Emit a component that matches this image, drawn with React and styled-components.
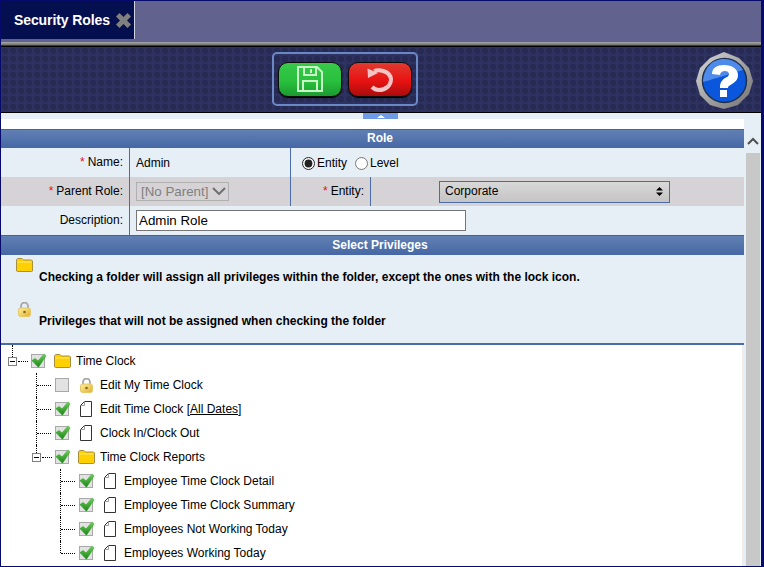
import styled, { createGlobalStyle } from "styled-components";

const GlobalStyle = createGlobalStyle`
    html, body {
        margin: 0;
        padding: 0;
        background: #ffffff;
    }
    body {
        font-family: "Liberation Sans", Arial, sans-serif;
        font-size: 12px;
        color: #000000;
    }
    * {
        box-sizing: border-box;
    }
`

const Frame = styled.div`
    width: 764px;
    height: 567px;
    overflow: hidden;
    display: flex;
    flex-direction: column;
    border: 1px solid #050a6b;
    border-right-width: 3px;
`
const TabBar = styled.div`
    height: 41px;
    flex: none;
    display: flex;
    align-items: flex-start;
    background: #62628f;
`
const Tab = styled.div`
    width: 134px;
    height: 38px;
    display: flex;
    align-items: center;
    gap: 6px;
    padding-left: 13px;
    background: #040f4f;
    border-right: 1px solid #d0d4e0;
`
const TabTitle = styled.span`
    font-size: 14px;
    font-weight: bold;
    letter-spacing: -0.1px;
    color: #ffffff;
    white-space: nowrap;
`
const Rule = styled.div`
    height: 4px;
    flex: none;
    background: linear-gradient(#a8a8a8, #6f6f6f);
    border-bottom: 1px solid #3a3a3a;
`
const Toolbar = styled.div`
    height: 67px;
    flex: none;
    display: flex;
    align-items: center;
    padding-left: 271px;
    padding-bottom: 1px;
    border-top: 1px solid #000000;
    border-bottom: 1px solid #000000;
    background-color: #2e3261;
    background-image: radial-gradient(circle at 4px 4px, #272a52 3px, transparent 3.6px);
    background-size: 8px 8px;
    position: relative;
`
const ActionGroup = styled.div`
    width: 146px;
    height: 54px;
    display: flex;
    align-items: center;
    justify-content: center;
    gap: 6px;
    border: 2px solid #6a88c4;
    border-radius: 5px;
`
const ActionButton = styled.button`
    width: 64px;
    height: 35px;
    padding: 0;
    display: flex;
    align-items: center;
    justify-content: center;
    border: 1px solid #0c0c0c;
    border-radius: 10px;
    background: ${(p) => p.$tone === "green"
        ? "linear-gradient(#38c84a, #28c03c 55%, #1c9a30)"
        : "linear-gradient(#e03a30, #e81212 55%, #a80c0c)"};
    box-shadow: 0 1px 1px #000000;
`
const HelpButton = styled.div`
    position: absolute;
    right: 8px;
    top: 5px;
    width: 57px;
    height: 57px;
`
const CollapseStrip = styled.div`
    height: 6px;
    flex: none;
    display: flex;
    padding-left: 362px;
    background: #e6eef6;
`
const CollapseHandle = styled.div`
    width: 35px;
    height: 6px;
    display: flex;
    align-items: center;
    justify-content: center;
    background: #6f9ae6;
    &::after {
        content: "";
        border-left: 4px solid transparent;
        border-right: 4px solid transparent;
        border-bottom: 3px solid #ffffff;
    }
`
const ContentArea = styled.div`
    flex: 1;
    display: flex;
    min-height: 0;
`
const Main = styled.div`
    width: 743px;
    flex: none;
    padding-top: 10px;
    display: flex;
    flex-direction: column;
`
const SectionHeader = styled.div`
    height: ${(p) => p.$height}px;
    flex: none;
    display: flex;
    align-items: center;
    justify-content: center;
    padding: 0 0 2px 15px;
    font-weight: bold;
    color: #ffffff;
    background: linear-gradient(#6080b4, #4767a5);
    border-top: 1px solid #3f63a5;
`
const FormRow = styled.div`
    height: 29px;
    flex: none;
    display: grid;
    grid-template-columns: 128px 161px 80px 1fr;
    background: ${(p) => (p.$shaded ? "#d5d3d5" : "#e6eef6")};
`
const LabelCell = styled.div`
    display: flex;
    align-items: center;
    justify-content: flex-end;
    gap: 3px;
    padding-right: 6px;
    padding-bottom: 2px;
`
const EntityLabelCell = styled(LabelCell)`
    border-left: 1px solid #4a6ca8;
`
const ValueCell = styled.div`
    display: flex;
    align-items: center;
    padding-left: 6px;
    border-left: 1px solid #4a6ca8;
`
const WideCell = styled(ValueCell)`
    grid-column: 2 / 5;
`
const Star = styled.span`
    color: #e8102c;
`
const OptionCell = styled(ValueCell)`
    grid-column: 3 / 5;
    padding-left: 11px;
    padding-top: 1px;
`
const OptionLabel = styled.label`
    display: flex;
    align-items: center;
    gap: 2px;
    margin-right: 8px;
`
const Radio = styled.input`
    margin: 0;
    width: 13px;
    height: 13px;
    accent-color: #222222;
`
const SelectWrap = styled.div`
    position: relative;
    width: 93px;
    height: 19px;
    display: flex;
`
const ParentSelect = styled.select`
    width: 100%;
    height: 100%;
    padding: 0 0 0 4px;
    appearance: none;
    font-family: "Liberation Sans", Arial, sans-serif;
    font-size: 13.33px;
    color: #808080;
    background: #d5d3d5;
    border: 1px solid #b0b0b0;
    opacity: 1;
`
const SelectChevron = styled.svg`
    position: absolute;
    right: 3px;
    top: 5px;
`
const EntityCell = styled(ValueCell)`
    padding-left: 68px;
`
const EntitySelect = styled.div`
    width: 231px;
    height: 22px;
    display: flex;
    align-items: center;
    justify-content: space-between;
    padding: 0 6px 1px 5px;
    border: 1px solid #4a6ca8;
    background: linear-gradient(#d8d8d8, #c4c4c4);
`
const TextInput = styled.input`
    width: 330px;
    height: 21px;
    padding: 0 2px;
    font-family: "Liberation Sans", Arial, sans-serif;
    font-size: 13.33px;
    border: 1px solid #767676;
    background: #ffffff;
`
const InfoPanel = styled.div`
    height: 90px;
    flex: none;
    padding: 3px 0 0 15px;
    background: #e6eef6;
    border-bottom: 2px solid #4a6ca8;
    font-weight: bold;
`
const InfoIcon = styled.div`
    height: 12px;
    padding-left: ${(p) => p.$indent || 0}px;
`
const InfoText = styled.div`
    margin-left: 23px;
    height: ${(p) => p.$height}px;
`
const Tree = styled.div`
    flex: 1;
    padding-top: 4px;
    position: relative;
    border-right: 2px solid #eeeeee;
    &::before {
        content: "";
        position: absolute;
        left: 11px;
        top: 0;
        height: 12px;
        border-left: 1px dotted #000000;
    }
`
const TreeRow = styled.div`
    height: 24px;
    display: flex;
    align-items: center;
    position: relative;
    padding-left: ${(p) => 30 + p.$level * 24}px;
`
const HLine = styled.span`
    position: absolute;
    left: ${(p) => p.$x}px;
    top: 12px;
    width: ${(p) => p.$width}px;
    border-top: 1px dotted #000000;
`
const VLine = styled.span`
    position: absolute;
    left: ${(p) => p.$x}px;
    top: 0;
    height: ${(p) => p.$height}px;
    border-left: 1px dotted #000000;
`
const Toggle = styled.span`
    position: absolute;
    left: ${(p) => p.$x}px;
    top: 8px;
    width: 9px;
    height: 9px;
    border: 1px solid #808080;
    background: #ffffff;
    &::after {
        content: "";
        position: absolute;
        left: 1px;
        top: 3px;
        width: 5px;
        height: 1px;
        background: #000000;
    }
`
const NodeIcon = styled.span`
    width: 24px;
    height: 16px;
    margin-left: 7px;
    flex: none;
    display: flex;
    align-items: center;
    padding-left: ${(p) => (p.$kind === "folder" ? 0 : 2)}px;
`
const NodeLabel = styled.span`
    margin-left: -2px;
    white-space: nowrap;
`
const Underlined = styled.span`
    text-decoration: underline;
`
const Scrollbar = styled.div`
    width: 17px;
    flex: none;
    display: flex;
    flex-direction: column;
    background: #e6eef6;
`
const ScrollArrow = styled.div`
    height: 34px;
    flex: none;
    display: flex;
    align-items: flex-end;
    justify-content: center;
    padding-bottom: 8px;
`
const ScrollThumb = styled.div`
    flex: 1;
    margin: 0 1px 0 2px;
    background: #c8c8c8;
`

const FloppyIcon = () => (
    <svg width="26" height="26" viewBox="0 0 26 26" fill="none" stroke="#c8f4c8" strokeWidth="2">
        <path d="M1 1h19l5 5v19H1z" />
        <path d="M7 1v8h12V1M14 3v4" />
        <path d="M6 25V15h14v10" />
    </svg>
)

const UndoIcon = () => (
    <svg width="26" height="26" viewBox="0 0 26 26">
        <path d="M7 5C12 3 23 5 24 13C24 20 18 24 12 24C9 24 7 23 5 21" fill="none" stroke="#f4c4c4" strokeWidth="4" />
        <path d="M0.500 2.500L1 12L11 7z" fill="#f4c4c4" />
    </svg>
)

const HelpIcon = () => (
    <svg width="57" height="57" viewBox="0 0 57 57">
        <defs>
            <linearGradient id="metal" x1="0" y1="0" x2="1" y2="1">
                <stop offset="0" stopColor="#d8d8d8" />
                <stop offset="1" stopColor="#707070" />
            </linearGradient>
        </defs>
        <path d="M28 0l15 6 10 10 4 13-4 13-11 11-14 4-14-4-10-10L0 29l4-13L14 6z" fill="url(#metal)" />
        <circle cx="28.500" cy="28.500" r="22" fill="#0a56dc" stroke="#20304c" strokeWidth="1.500" />
        <path d="M7 30C8 16 16 7 28 7c8 0 15 4 19 11C36 21 22 26 7 30z" fill="#4d8aea" />
        <path d="M16 22c0-6 5-9 12-9 8 0 14 4 14 10 0 5-3 7-6 9-3 2-4 2-4 4h-8c0-5 1-7 5-10 2-1 4-2 4-4s-2-3-4-3c-3 0-5 2-5 4z" fill="#ffffff" />
        <rect x="24" y="38" width="7" height="7" fill="#ffffff" />
    </svg>
)

const CloseIcon = () => (
    <svg width="15" height="15" viewBox="0 0 15 15">
        <path d="M0 3.500L3.500 0L7.500 4L11.500 0L15 3.500L11 7.500L15 11.500L11.500 15L7.500 11L3.500 15L0 11.500L4 7.500z" fill="#808080" />
    </svg>
)

const FolderIcon = () => (
    <svg width="17" height="14" viewBox="0 0 17 14">
        <path d="M0.500 3V1.500L1.500 0.500H6L7.500 2H15.500L16.500 3V13L15.500 13.500H1.500L0.500 13z" fill="#ffd000" stroke="#a89040" />
        <path d="M1.500 4H15.500" stroke="#ffe870" />
    </svg>
)

const LockIcon = () => (
    <svg width="13" height="15" viewBox="0 0 13 15">
        <defs>
            <linearGradient id="lockBody" x1="0" y1="0" x2="1" y2="1">
                <stop offset="0" stopColor="#fff0a0" />
                <stop offset="1" stopColor="#e0b030" />
            </linearGradient>
        </defs>
        <path d="M3 7V4a3.500 3.500 0 0 1 7 0V7" fill="none" stroke="#a8a8a8" strokeWidth="1.800" />
        <rect x="0.500" y="6" width="12" height="8.500" rx="2" fill="url(#lockBody)" stroke="#e8c860" />
        <circle cx="6.500" cy="10" r="1.300" fill="#8a6a20" />
    </svg>
)

const DocIcon = () => (
    <svg width="12" height="16" viewBox="0 0 12 16" fill="#ffffff" stroke="#333333">
        <path d="M4.500 0.500H11.500V15.500H0.500V4.500z" />
        <path d="M4.500 0.500V4.500H0.500" fill="none" stroke="#999999" />
    </svg>
)

const CheckIcon = ({ checked }) => (
    <svg width="16" height="16" viewBox="0 0 16 16">
        <defs>
            <linearGradient id="tick" x1="0" y1="0" x2="0" y2="1">
                <stop offset="0" stopColor="#6fd05c" />
                <stop offset="1" stopColor="#1c8418" />
            </linearGradient>
        </defs>
        <rect x="0.500" y="1.500" width="13" height="13" fill="#e2e2e2" stroke="#a8a8a8" />
        {checked && <path d="M0.500 7.500L4 5L7 7.500L13 0.500L15.500 3L7.500 14.500z" fill="url(#tick)" />}
    </svg>
)

const SortArrows = () => (
    <svg width="7" height="9" viewBox="0 0 7 9" fill="#000000">
        <path d="M3.500 0L7 3.500H0zM3.500 9L0 5.500H7z" />
    </svg>
)

const treeNodes = [
    { level: 0, icon: "folder", checked: true, toggle: true, label: "Time Clock" },
    { level: 1, icon: "lock", checked: false, label: "Edit My Time Clock" },
    { level: 1, icon: "doc", checked: true, label: "Edit Time Clock ", extra: "[All Dates]" },
    { level: 1, icon: "doc", checked: true, label: "Clock In/Clock Out" },
    { level: 1, icon: "folder", checked: true, toggle: true, last: true, label: "Time Clock Reports" },
    { level: 2, icon: "doc", checked: true, label: "Employee Time Clock Detail" },
    { level: 2, icon: "doc", checked: true, label: "Employee Time Clock Summary" },
    { level: 2, icon: "doc", checked: true, label: "Employees Not Working Today" },
    { level: 2, icon: "doc", checked: true, last: true, label: "Employees Working Today" },
]

const icons = {
    folder: <FolderIcon />,
    lock: <LockIcon />,
    doc: <DocIcon />,
}

const App = () => {
    return (
        <>
            <GlobalStyle />
            <Frame>
                <TabBar>
                    <Tab>
                        <TabTitle>Security Roles</TabTitle>
                        <CloseIcon />
                    </Tab>
                </TabBar>
                <Rule />
                <Toolbar>
                    <ActionGroup>
                        <ActionButton $tone="green" aria-label="Save"><FloppyIcon /></ActionButton>
                        <ActionButton $tone="red" aria-label="Undo"><UndoIcon /></ActionButton>
                    </ActionGroup>
                    <HelpButton><HelpIcon /></HelpButton>
                </Toolbar>
                <CollapseStrip><CollapseHandle /></CollapseStrip>
                <ContentArea>
                    <Main>
                        <SectionHeader $height={19}>Role</SectionHeader>
                        <FormRow>
                            <LabelCell><Star>*</Star> Name:</LabelCell>
                            <ValueCell>Admin</ValueCell>
                            <OptionCell>
                                <OptionLabel><Radio type="radio" name="scope" defaultChecked /> Entity</OptionLabel>
                                <OptionLabel><Radio type="radio" name="scope" /> Level</OptionLabel>
                            </OptionCell>
                        </FormRow>
                        <FormRow $shaded>
                            <LabelCell><Star>*</Star> Parent Role:</LabelCell>
                            <ValueCell>
                                <SelectWrap>
                                    <ParentSelect disabled><option>[No Parent]</option></ParentSelect>
                                    <SelectChevron width="14" height="8" viewBox="0 0 14 8" fill="none" stroke="#707070" strokeWidth="2">
                                        <path d="M1 1l6 6 6-6" />
                                    </SelectChevron>
                                </SelectWrap>
                            </ValueCell>
                            <EntityLabelCell><Star>*</Star> Entity:</EntityLabelCell>
                            <EntityCell>
                                <EntitySelect>Corporate <SortArrows /></EntitySelect>
                            </EntityCell>
                        </FormRow>
                        <FormRow>
                            <LabelCell>Description:</LabelCell>
                            <WideCell><TextInput defaultValue="Admin Role" /></WideCell>
                        </FormRow>
                        <SectionHeader $height={20}>Select Privileges</SectionHeader>
                        <InfoPanel>
                            <InfoIcon><FolderIcon /></InfoIcon>
                            <InfoText $height={32}>Checking a folder will assign all privileges within the folder, except the ones with the lock icon.</InfoText>
                            <InfoIcon $indent={2}><LockIcon /></InfoIcon>
                            <InfoText $height={20}>Privileges that will not be assigned when checking the folder</InfoText>
                        </InfoPanel>
                        <Tree>
                            {treeNodes.map((node, i) => (
                                <TreeRow key={i} $level={node.level}>
                                    {node.level > 0 && <VLine $x={11 + node.level * 24} $height={node.last ? 12 : 24} />}
                                    {node.toggle
                                        ? <HLine $x={17 + node.level * 24} $width={10} />
                                        : <HLine $x={12 + node.level * 24} $width={14} />}
                                    {node.toggle && <Toggle $x={7 + node.level * 24} />}
                                    <CheckIcon checked={node.checked} />
                                    <NodeIcon $kind={node.icon}>{icons[node.icon]}</NodeIcon>
                                    <NodeLabel>
                                        {node.label}
                                        {node.extra && <Underlined>{node.extra}</Underlined>}
                                    </NodeLabel>
                                </TreeRow>
                            ))}
                        </Tree>
                    </Main>
                    <Scrollbar>
                        <ScrollArrow>
                            <svg width="12" height="8" viewBox="0 0 12 8" fill="none" stroke="#505050" strokeWidth="2"><path d="M1 7l5-5 5 5" /></svg>
                        </ScrollArrow>
                        <ScrollThumb />
                    </Scrollbar>
                </ContentArea>
            </Frame>
        </>
    )
}

export default App;
